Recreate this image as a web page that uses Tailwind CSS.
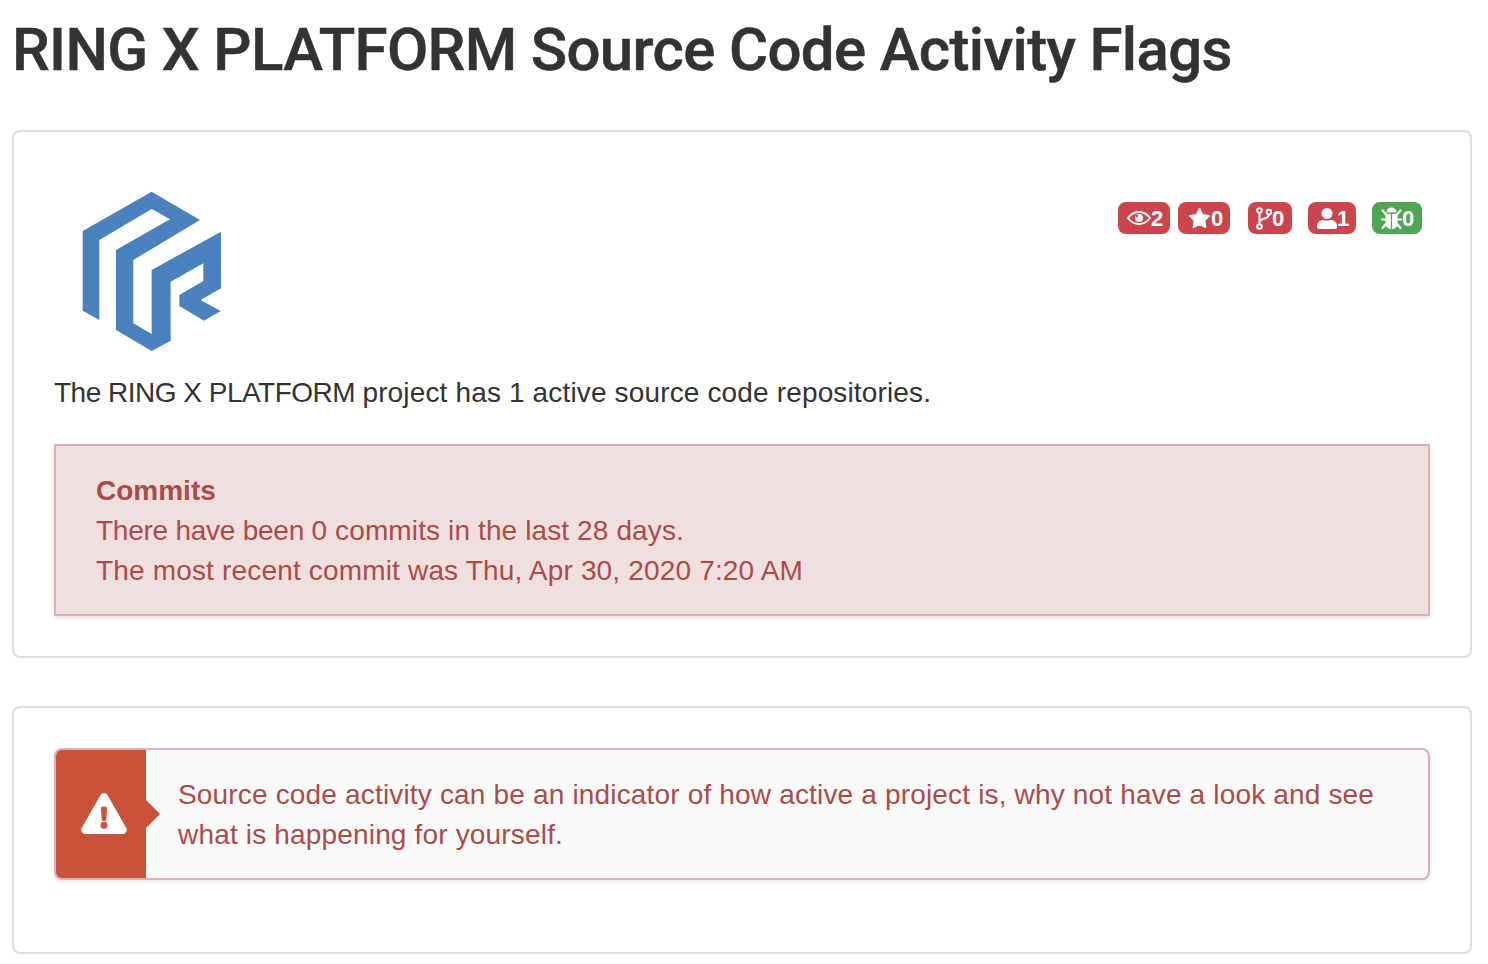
<!doctype html>
<html><head><meta charset="utf-8"><script src="https://cdn.jsdelivr.net/npm/@tailwindcss/browser@4"></script></head>
<body class="bg-white font-['Liberation_Sans',sans-serif] text-[28px] leading-[40px] text-[#333]">
<div class="pl-3 pr-4 h-[964px] overflow-hidden">
<h1 class="pt-[20px] h-[130px] font-['Roboto',sans-serif] text-[60px] leading-[60px] font-medium tracking-[-0.66px] [-webkit-text-stroke:0.5px_#333] text-[#333]">RING X PLATFORM Source Code Activity Flags</h1>
<section class="border-2 border-[#ddd] rounded-lg p-10 h-[528px]">
  <div class="flex justify-between h-[200px]">
    <svg class="w-[200px] h-[200px] shrink-0" viewBox="0 0 200 200"><g transform="translate(6 8) scale(0.3333)"><path fill="#4a82c0" d="M68 153L275 35L420 120L220 240V430L275 462V270L483 155V325L422 360L482 393L432 422L358 378V345L430 303V250L332 305V482L275 513L168 450V210L330 118L275 87L118 180V420L68 392Z"/></g></svg>
    <div class="flex items-start pt-[30px] pr-2 text-[22px] leading-[32px] font-bold text-white">
      <span class="flex items-center w-[52px] h-8 pl-[9px] rounded-lg bg-[#cc444c]"><svg class="w-[24px] h-[14px] shrink-0" viewBox="0 0 24 14"><path fill="none" stroke="#fff" stroke-width="1.8" d="M1 7C5 1.500 9 1 12 1S19 1.500 23 7C19 12.500 15 13 12 13S5 12.500 1 7Z"/><circle cx="12" cy="7" r="4" fill="#fff"/><circle cx="10" cy="5" r="1.200" fill="#cc444c"/></svg><span class="pt-px">2</span></span>
      <span class="flex items-center w-[52px] h-8 pl-[10px] rounded-lg bg-[#cc444c] ml-2"><svg class="w-[23px] h-[22px] shrink-0" viewBox="0 0 23 22"><path fill="#fff" stroke="#fff" stroke-width="2" stroke-linejoin="round" d="M11.500 2L14.300 8L21 8.900L16.200 13.500L17.400 20L11.500 16.800L5.600 20L6.800 13.500L2 8.900L8.700 8Z"/></svg><span class="pt-px">0</span></span>
      <span class="flex items-center w-[44px] h-8 pl-2 rounded-lg bg-[#cc444c] ml-[18px]"><svg class="w-[16px] h-[23px] shrink-0" viewBox="0 0 16 23"><g fill="none" stroke="#fff" stroke-width="2"><circle cx="3.500" cy="3.500" r="2.300"/><circle cx="3.500" cy="19.500" r="2.300"/><circle cx="13" cy="5" r="2.300"/><path d="M3.500 6V17M3.500 15C4 11 13 12.500 13 7.500"/></g></svg><span class="pt-px">0</span></span>
      <span class="flex items-center w-[48px] h-8 pl-[9px] rounded-lg bg-[#cc444c] ml-4"><svg class="w-[20px] h-[21px] shrink-0" viewBox="0 0 20 21"><circle cx="10" cy="5.500" r="5.500" fill="#fff"/><path fill="#fff" d="M0 17.500C0 14 3.500 12 6.500 12C8 12.700 12 12.700 13.500 12C16.500 12 20 14 20 17.500V19Q20 21 18 21H2Q0 21 0 19Z"/></svg><span class="pt-px">1</span></span>
      <span class="flex items-center w-[50px] h-8 pl-[9px] rounded-lg bg-[#50a653] ml-4"><svg class="w-[21px] h-[23px] shrink-0" viewBox="0 0 21 23"><path fill="#fff" d="M5.500 5.500C5.500 2.500 7.800 .5 10.500 .5S15.500 2.500 15.500 5.500ZM4.500 7H9.900V22C6.500 22 4.500 19.500 4.500 16ZM11.100 7H16.500V16C16.500 19.500 14.500 22 11.100 22Z"/><path fill="none" stroke="#fff" stroke-width="2.200" stroke-linecap="round" d="M1.500 3.500L5 7.500M19.500 3.500L16 7.500M1 12.500H5M20 12.500H16M1.500 21L5 17M19.500 21L16 17"/></svg><span class="pt-px">0</span></span>
    </div>
  </div>
  <p class="pt-px"><span class="tracking-[-0.5px]">The RING X PLATFORM </span><span class="tracking-[0.15px]">project has 1 active source code repositories.</span></p>
  <div class="mt-[31px] border-2 border-[#deb0b4] bg-[#f0dfdf] text-[#ad4b49] px-10 pt-[25px] pb-6 h-[172px] shadow-[0_2px_5px_rgba(0,0,0,0.12)]">
    <strong class="block">Commits</strong>
    <div><span class="tracking-[-0.25px]">There have been </span><span class="tracking-[0.12px]">0 commits in the last 28 days.</span></div>
    <div class="tracking-[0.17px]">The most recent commit was Thu, Apr 30, 2020 7:20 AM</div>
  </div>
</section>
<section class="mt-12 border-2 border-[#ddd] rounded-lg px-10 pt-10 h-[248px]">
  <div class="flex h-[132px] border-2 border-[#deb0b4] rounded-lg bg-[#fafafa] text-[#ad4b49] shadow-[0_2px_4px_rgba(0,0,0,0.1)]">
    <div class="relative w-[90px] shrink-0 flex items-center justify-center bg-[#c9523a] rounded-l-md">
      <svg class="ml-[6px] -mt-[1px] w-[46px] h-[41px]" viewBox="0 0 46 41"><path fill="#fff" fill-rule="evenodd" d="M23 0C24.500 0 25.800 .8 26.500 2L45.300 35C46.800 37.800 44.800 41 41.800 41H4.200C1.200 41 -.8 37.800 .7 35L19.500 2C20.200 .8 21.500 0 23 0ZM20 15.500Q20 13.500 22 13.500H24Q26 13.500 26 15.500L25.300 27Q25.200 28 24 28H22Q20.800 28 20.700 27ZM23 28.800A3.500 3.500 0 1 0 23 35.800A3.500 3.500 0 1 0 23 28.800Z"/></svg>
      <span class="absolute left-full top-1/2 -translate-y-1/2 w-0 h-0 border-y-[14px] border-y-transparent border-l-[14px] border-l-[#c9523a]"></span>
    </div>
    <p class="pl-8 pr-8 pt-[25px] tracking-[0.17px]">Source code activity can be an indicator of how active a project is, why not have a look and see what is happening for yourself.</p>
  </div>
</section>
</div>
</body></html>
